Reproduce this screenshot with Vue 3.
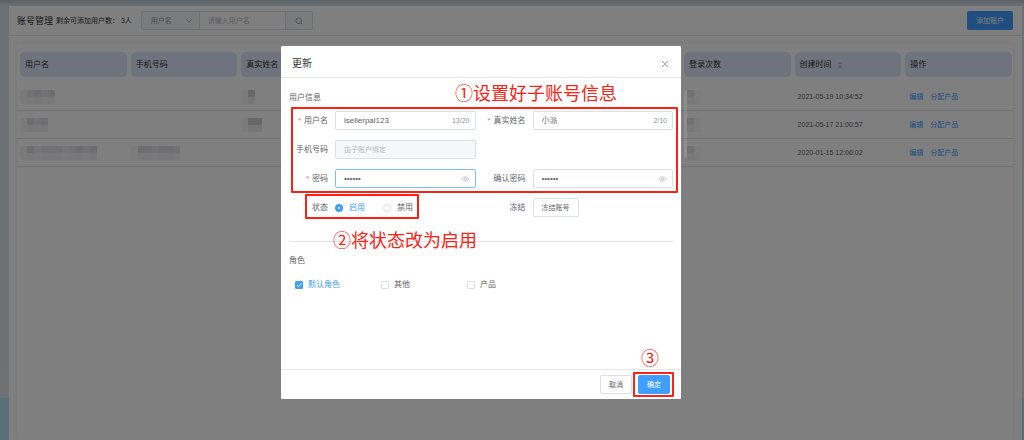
<script setup>
import { ref } from 'vue'

const blank = ['', '', '']
const columns = ['用户名', '手机号码', '真实姓名', ...blank, '登录次数', '创建时间', '操作']
const rows = [
  { user: ['e', 'c', 'b', 'c', 'b'], phone: [], name: ['f', 'a'], time: '2021-05-19 10:34:52' },
  { user: ['e', 'b', 'c', 'b'], phone: [], name: ['f', 'a', 'a'], time: '2021-05-17 21:00:57' },
  {
    user: ['e', 'b', 'd', 'c', 'c', 'c', 'd', 'c', 'b', 'c', 'b'],
    phone: ['f', 'b', 'b', 'c', 'b', 'b', 'c'],
    name: [],
    time: '2020-01-15 12:06:02',
  },
]
const searchField = ref('user')
const keyword = ref('')
const username = ref('isellerpal123')
const realName = ref('小派')
const password = ref('abc123')
const confirmPassword = ref('abc123')
const status = ref('on')
const roles = ref([
  { id: 'default', label: '默认角色', checked: true },
  { id: 'other', label: '其他', checked: false },
  { id: 'product', label: '产品', checked: false },
])
</script>

<template>
  <div class="page">
    <main class="card">
      <header class="toolbar">
        <h1>账号管理</h1>
        <span class="quota">剩余可添加用户数： 3人</span>
        <form class="search" @submit.prevent>
          <span class="select-wrap">
            <select v-model="searchField" aria-label="搜索字段">
              <option value="user">用户名</option>
            </select>
            <svg class="caret" viewBox="0 0 8 8"><path d="M1.500 2.500 4 5.200 6.500 2.500" /></svg>
          </span>
          <input v-model="keyword" type="text" placeholder="请输入用户名" aria-label="请输入用户名" />
          <button type="submit" aria-label="搜索">
            <svg viewBox="0 0 8 8"><circle cx="3.800" cy="3.700" r="2.800" /><path d="M5.800 5.800 7.300 7.300" /></svg>
          </button>
        </form>
        <button type="button" class="add">添加账户</button>
      </header>

      <section class="panel">
        <table>
          <thead>
            <tr>
              <th v-for="(c, i) in columns" :key="i">
                <div class="head">
                  {{ c }}
                  <svg v-if="c === '创建时间'" class="sort" viewBox="0 0 6 8"><path d="M3 0.500 5.500 3.200H0.500ZM3 7.500 5.500 4.800H0.500Z" /></svg>
                </div>
              </th>
            </tr>
          </thead>
          <tbody>
            <tr v-for="(r, n) in rows" :key="r.time">
              <td><span class="mosaic"><i v-for="(t, i) in r.user" :key="i" :class="t"></i></span></td>
              <td><span class="mosaic"><i v-for="(t, i) in r.phone" :key="i" :class="t"></i></span></td>
              <td><span class="mosaic"><i v-for="(t, i) in r.name" :key="i" :class="t"></i></span></td>
              <td></td>
              <td></td>
              <td></td>
              <td>
                <span class="mosaic count"><b v-if="n === 0" class="smear"></b><i class="c"></i><i class="f"></i></span>
              </td>
              <td class="time">{{ r.time }}</td>
              <td class="actions"><a href="#">编辑</a><a href="#">分配产品</a></td>
            </tr>
          </tbody>
        </table>
      </section>
    </main>

    <div class="overlay">
      <section class="modal" role="dialog" aria-labelledby="dialog-title">
        <header class="modal-head">
          <h2 id="dialog-title">更新</h2>
          <button type="button" class="close" aria-label="关闭">
            <svg viewBox="0 0 8 8"><path d="M1 1 7 7M7 1 1 7" /></svg>
          </button>
        </header>

        <div class="modal-body">
          <h3>用户信息</h3>
          <div class="form">
            <label class="required" for="username">用户名</label>
            <div class="field">
              <input id="username" v-model="username" type="text" maxlength="20" />
              <span class="counter">{{ username.length }}/20</span>
            </div>
            <label class="required" for="realname">真实姓名</label>
            <div class="field">
              <input id="realname" v-model="realName" type="text" maxlength="10" />
              <span class="counter">{{ realName.length }}/10</span>
            </div>

            <label for="phone">手机号码</label>
            <div class="field disabled">
              <input id="phone" type="text" placeholder="由子账户绑定" disabled />
            </div>
            <span></span>
            <span></span>

            <label class="required" for="password">密码</label>
            <div class="field focused">
              <input id="password" v-model="password" type="password" />
              <svg class="eye" viewBox="0 0 10 8"><path d="M1 4C2.800 0.700 7.200 0.700 9 4 7.200 7.300 2.800 7.300 1 4Z" /><circle cx="5" cy="4" r="1.500" /></svg>
            </div>
            <label for="confirm">确认密码</label>
            <div class="field">
              <input id="confirm" v-model="confirmPassword" type="password" />
              <svg class="eye" viewBox="0 0 10 8"><path d="M1 4C2.800 0.700 7.200 0.700 9 4 7.200 7.300 2.800 7.300 1 4Z" /><circle cx="5" cy="4" r="1.500" /></svg>
            </div>

            <span class="label">状态</span>
            <div class="radios">
              <label :class="{ on: status === 'on' }"><input v-model="status" type="radio" name="status" value="on" />启用</label>
              <label :class="{ on: status === 'off' }"><input v-model="status" type="radio" name="status" value="off" />禁用</label>
            </div>
            <span class="label">冻结</span>
            <div><button type="button" class="btn">冻结账号</button></div>
          </div>

          <hr />
          <h3>角色</h3>
          <div class="roles">
            <label v-for="r in roles" :key="r.id" :class="{ on: r.checked }">
              <span class="box">
                <input v-model="r.checked" type="checkbox" />
                <svg v-if="r.checked" viewBox="0 0 8 8"><path d="M1.800 4.200 3.400 5.700 6.300 2.400" /></svg>
              </span>
              {{ r.label }}
            </label>
          </div>
        </div>

        <footer class="modal-foot">
          <button type="button" class="btn">取消</button>
          <button type="button" class="btn primary">确定</button>
        </footer>

        <div class="mark mark-info"></div>
        <div class="mark mark-status"></div>
        <div class="mark mark-ok"></div>
        <p class="note note-info">①设置好子账号信息</p>
        <p class="note note-status">②将状态改为启用</p>
        <p class="note note-ok">③</p>
      </section>
    </div>
  </div>
</template>

<style>
body {
  margin: 0;
}
</style>

<style scoped>
* {
  box-sizing: border-box;
}
.page {
  position: relative;
  min-height: 100vh;
  padding: 6px 2px 0 9px;
  display: flex;
  background: linear-gradient(#b4c0c8, #d6e0e8 6px, #dce4ea 398px, #b8dcf0 398px);
  font-family: "Liberation Sans", "Noto Sans CJK SC", sans-serif;
  font-size: 7px;
  line-height: 12px;
  color: #606266;
}
button,
input,
select {
  margin: 0;
  font: inherit;
  color: inherit;
  outline: none;
}
button {
  cursor: pointer;
}
svg {
  fill: none;
  stroke: currentColor;
  display: block;
}
h1,
h2,
h3,
p {
  margin: 0;
  font-weight: 400;
}
.card {
  flex: 1;
  min-width: 0;
  background: #fff;
}
.toolbar {
  display: flex;
  align-items: center;
  height: 30px;
  padding: 0 9px 0 8px;
  border-bottom: 1px solid #e4e6ea;
}
h1 {
  font-size: 9px;
  color: #303133;
}
.quota {
  margin-left: 3px;
  color: #303133;
}
.search {
  display: flex;
  height: 19px;
  margin-left: 9px;
  border: 1px solid #dcdfe6;
  border-radius: 2px;
  background: #f5f7fa;
  color: #909399;
}
.select-wrap {
  display: flex;
  align-items: center;
  position: relative;
  width: 57px;
}
select {
  appearance: none;
  width: 100%;
  padding: 0 9px;
  border: 0;
  background: transparent;
}
.caret {
  position: absolute;
  right: 6px;
  width: 8px;
  height: 8px;
  stroke-width: 0.7;
  pointer-events: none;
}
.search input {
  width: 87px;
  padding: 0 8px;
  border: solid #dcdfe6;
  border-width: 0 1px;
  border-radius: 0;
  background: #fff;
}
::placeholder {
  color: #b4b8c0;
  opacity: 1;
}
.search button {
  display: grid;
  place-items: center;
  width: 26px;
  padding: 0;
  border: 0;
  background: transparent;
}
.search button svg {
  width: 8px;
  height: 8px;
  stroke-width: 0.8;
}
.add {
  margin-left: auto;
  height: 19px;
  padding: 0 9px;
  border: 0;
  border-radius: 2px;
  background: #409eff;
  color: #fff;
}
.panel {
  margin: 8px 9px 0 8px;
  padding-top: 8px;
  border-radius: 4px;
  min-height: calc(100vh - 44px);
  box-shadow: 0 0 6px rgba(0, 0, 0, 0.08);
}
table {
  width: 100%;
  table-layout: fixed;
  border-collapse: separate;
  border-spacing: 0;
}
th {
  padding: 0 1px 6px 3px;
  font-weight: 400;
  text-align: left;
}
.head {
  display: flex;
  align-items: center;
  gap: 5px;
  height: 25px;
  padding-left: 5px;
  border-radius: 5px;
  background: #dfe7fa;
  font-size: 8px;
  color: #303133;
}
.sort {
  width: 6px;
  height: 8px;
  fill: #b0b4bc;
  stroke: none;
}
td {
  height: 28px;
  padding: 0 3px;
  border-bottom: 1px solid #dcdee2;
}
.time {
  padding-left: 6px;
}
.actions {
  padding-left: 7px;
}
a {
  margin-right: 7px;
  color: #409eff;
  text-decoration: none;
}
.mosaic {
  display: flex;
  height: 14px;
  border-radius: 4px;
  overflow: hidden;
}
.mosaic i {
  width: 7px;
  background: linear-gradient(#e6e6e8 50%, #f4f5f5 50%);
}
.mosaic .a {
  background: linear-gradient(#cdced2 50%, #ececef 50%);
}
.mosaic .b {
  background: linear-gradient(#dcdde1 50%, #f0f1f2 50%);
}
.mosaic .c {
  background: linear-gradient(#e4e5e9 50%, #f2f3f3 50%);
}
.mosaic .d {
  background: linear-gradient(#ebecee 50%, #f5f5f5 50%);
}
.mosaic .e {
  background: #f5f5f6;
}
.mosaic .f {
  background: #f9f9fa;
}
.count {
  position: relative;
  padding-left: 3px;
  overflow: visible;
}
.smear {
  position: absolute;
  z-index: 1;
  top: 0;
  left: 0;
  width: 3px;
  height: 68px;
  border-radius: 3px 0 0 3px;
  background: rgba(255, 255, 255, 0.12);
}
.overlay {
  position: absolute;
  inset: 0;
  padding: 46px 62px 0 0;
  background: rgba(0, 0, 0, 0.5);
}
.modal {
  position: relative;
  z-index: 2;
  width: 400px;
  margin: 0 auto;
  border-radius: 1px;
  background: #fff;
}
.modal-head {
  display: flex;
  align-items: center;
  justify-content: space-between;
  height: 32px;
  padding: 4px 12px 0 11px;
  border-bottom: 1px solid #e4e6ea;
}
h2 {
  font-size: 10px;
  color: #303133;
}
.close {
  padding: 0;
  border: 0;
  background: none;
  color: #909399;
}
.close svg {
  width: 8px;
  height: 8px;
  stroke-width: 0.8;
}
.modal-body {
  padding: 14px 8px 78px;
  font-size: 8px;
}
h3 {
  font-size: 8px;
}
.form {
  display: grid;
  grid-template-columns: 39px 1fr 43px 1fr;
  grid-auto-rows: 19px;
  column-gap: 7px;
  row-gap: 10px;
  align-items: center;
  margin-top: 7px;
}
.form > label,
.label {
  text-align: right;
  white-space: nowrap;
}
.required::before {
  content: "*";
  margin-right: 3px;
  color: #f56c6c;
}
.field {
  display: flex;
  align-items: center;
  height: 19px;
  padding: 0 5px 0 8px;
  border: 1px solid #dcdfe6;
  border-radius: 2px;
}
.field input {
  flex: 1;
  min-width: 0;
  width: 100%;
  padding: 0;
  border: 0;
  background: transparent;
}
.field.focused {
  border-color: #7fbcff;
}
.disabled {
  background: #f5f7fa;
  font-size: 7px;
}
.counter {
  font-size: 7px;
  color: #909399;
}
.eye {
  width: 9px;
  height: 8px;
  color: #b4b8c0;
  stroke-width: 0.8;
}
.radios {
  display: flex;
  gap: 18px;
}
.radios label {
  display: flex;
  align-items: center;
  gap: 6px;
}
.on {
  color: #409eff;
}
.radios input {
  appearance: none;
  width: 8px;
  height: 8px;
  border: 1px solid #dcdfe6;
  border-radius: 50%;
}
.radios input:checked {
  border: 3px solid #409eff;
}
.btn {
  height: 19px;
  padding: 0 8px;
  border: 1px solid #dcdfe6;
  border-radius: 2px;
  background: #fff;
  font-size: 7px;
}
.btn.primary {
  border-color: #409eff;
  background: #409eff;
  color: #fff;
}
hr {
  margin: 24px 0 13px;
  border: 0;
  border-top: 1px solid #e0e2e6;
}
.roles {
  display: grid;
  grid-template-columns: repeat(3, 86px);
  margin: 12px 0 0 6px;
}
.roles label {
  display: flex;
  align-items: center;
  gap: 5px;
}
.box {
  position: relative;
  width: 8px;
  height: 8px;
}
.box input {
  display: block;
  appearance: none;
  width: 8px;
  height: 8px;
  border: 1px solid #dcdfe6;
  border-radius: 1px;
}
.box input:checked {
  border-color: #409eff;
  background: #409eff;
}
.box svg {
  position: absolute;
  inset: 0;
  color: #fff;
  pointer-events: none;
}
.modal-foot {
  display: flex;
  justify-content: flex-end;
  gap: 6px;
  padding: 5px 11px 5px;
  border-top: 1px solid #e4e6ea;
}
.mark {
  position: absolute;
  border: 2px solid #fe2012;
  border-radius: 1px;
  pointer-events: none;
}
.mark-info {
  top: 61px;
  left: 10px;
  right: 3px;
  height: 86px;
}
.mark-status {
  top: 148px;
  left: 24px;
  width: 114px;
  height: 25px;
}
.mark-ok {
  right: 7px;
  bottom: 2px;
  width: 41px;
  height: 25px;
}
.note {
  position: absolute;
  font-family: "Noto Sans CJK SC", sans-serif;
  font-size: 18px;
  line-height: 20px;
  color: #fe2012;
  white-space: nowrap;
}
.note-info {
  top: 36px;
  left: 174px;
}
.note-status {
  top: 183px;
  left: 52px;
}
.note-ok {
  right: 22px;
  bottom: 32px;
}
</style>
